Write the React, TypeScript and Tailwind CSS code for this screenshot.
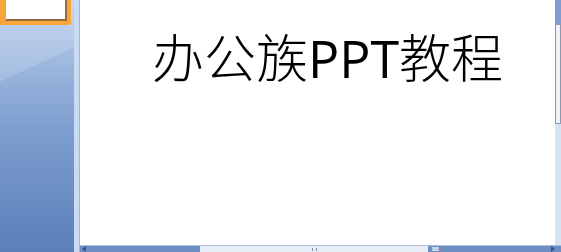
export default function App() {
  return (
    <div className="w-[561px] h-[252px] overflow-hidden flex bg-[#c4d7ee]">
      {/* thumbnail pane */}
      <div className="relative w-[74px] h-full bg-gradient-to-b from-[#bcd1ec] via-[#7f9fd0] to-[#5a7fb9] overflow-hidden">
        <div className="absolute -left-[20px] top-[28px] w-[140px] h-[60px] bg-white/15 rotate-[-25deg] origin-left" />
        <div className="relative w-[71px] h-[25px] bg-[#f6a63a] rounded-br-[2px] pl-[6px] pr-[4px] pb-[4px]">
          <div className="w-full h-full bg-white border-b-2 border-r-2 border-[#9a6a3a]" />
        </div>
      </div>
      {/* splitter */}
      <div className="w-[6px] h-full bg-[#c9dbf1] border-r border-[#9fb6d6]" />
      {/* slide + scrollbars */}
      <div className="flex-1 flex flex-col">
        <div className="flex-1 flex">
          <div className="flex-1 bg-white flex justify-center pt-[26px]">
            <div
              className="text-[52px] leading-[60px] text-black ml-[20px]"
              style={{ fontFamily: '"Noto Sans CJK SC", sans-serif', fontWeight: 300 }}
            >
              办公族<span style={{ fontFamily: '"Open Sans", "Noto Sans", sans-serif', fontWeight: 400 }}>PPT</span>教程
            </div>
          </div>
          {/* vertical scrollbar */}
          <div className="w-[6px] flex flex-col bg-[#d9e6f6]">
            <div className="h-[24px] bg-[#7f9dcc]" />
            <div className="h-[100px] bg-[#eef3fa] border border-[#8a9ab0]" />
            <div className="flex-1 bg-[#d6e3f4]" />
          </div>
        </div>
        {/* horizontal scrollbar */}
        <div className="h-[7px] flex items-center bg-[#6d8ec3] border-t border-[#a9bedc]">
          <div className="w-[120px] h-full flex items-center pl-[2px]">
            <div className="w-0 h-0 border-y-[3px] border-y-transparent border-r-[4px] border-r-[#35558a]" />
          </div>
          <div className="w-[228px] h-full bg-[#e8eef7] flex justify-center items-center">
            <div className="w-[5px] h-[3px] border-x border-[#8090a8]" />
          </div>
          <div className="flex-1 h-full flex items-center justify-between pl-[4px] pr-[6px]">
            <span className="text-[6px] leading-[6px] text-white font-bold" style={{ fontFamily: '"Liberation Sans", sans-serif' }}>88</span>
            <div className="w-0 h-0 border-y-[3px] border-y-transparent border-l-[4px] border-l-[#35558a]" />
          </div>
        </div>
      </div>
    </div>
  );
}
